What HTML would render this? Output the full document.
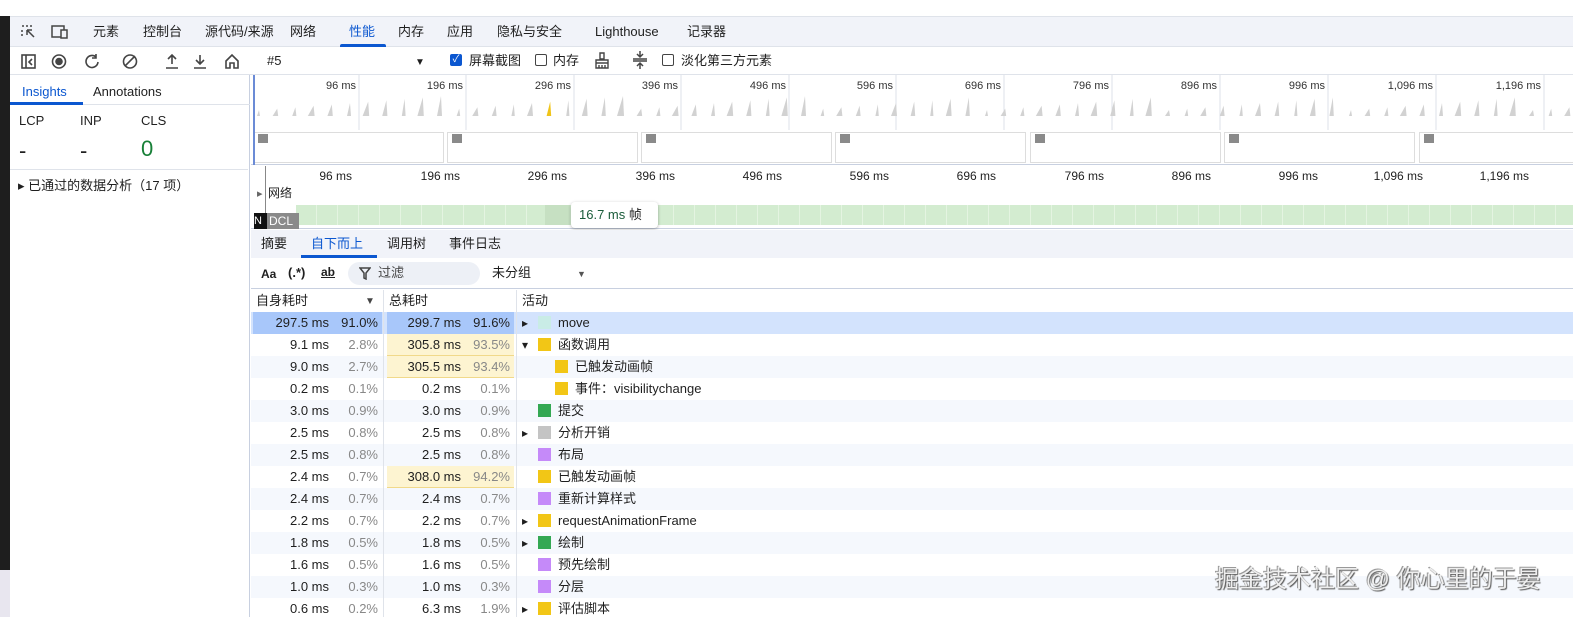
<!DOCTYPE html><html><head><meta charset="utf-8"><style>
*{box-sizing:border-box;margin:0;padding:0}
body{width:1573px;height:617px;overflow:hidden;background:#fff;font-family:"Liberation Sans","Noto Sans CJK SC",sans-serif;font-size:13px;line-height:16px;color:#1f1f1f;position:relative}
.a{position:absolute}
.dark{left:0;top:16px;width:10px;height:554px;background:#1e1e1e}
.tabbar{left:10px;top:16px;width:1563px;height:31px;background:#f1f3f9;border-top:1px solid #dfe3ea;border-bottom:1px solid #dfe3ea}
.tabbar span{position:absolute;top:7px;font-size:13px}
.tool{left:10px;top:47px;width:1563px;height:28px;border-bottom:1px solid #dfe3ea}
.tool span{position:absolute;top:6px;font-size:13px}
.left{left:10px;top:75px;width:240px;height:542px;border-right:1px solid #c8d0e0}
.ms{font-size:11px;position:absolute}
.cell{position:absolute;font-size:13px;text-align:right}
.gray{color:#888}
.sq{position:absolute;width:13px;height:13px}
</style></head><body>
<div class="a dark"></div>
<div class="a" style="left:0;top:570px;width:10px;height:47px;background:#e8e6ef"></div>
<div class="a tabbar">
<svg class="a" style="left:10px;top:7px" width="18" height="16"><path d="M2 2h2M6 2h2M10 2h2M2 6v2M2 10v2M7 6l7 7M7 6v5M7 6h5" stroke="#444" stroke-width="1.5" fill="none"/></svg>
<svg class="a" style="left:40px;top:7px" width="20" height="16"><rect x="2" y="2" width="12" height="11" fill="none" stroke="#444" stroke-width="1.5"/><rect x="11" y="6" width="6" height="8" fill="#f1f3f9" stroke="#444" stroke-width="1.5"/></svg>
<span style="left:83px">元素</span><span style="left:133px">控制台</span><span style="left:195px">源代码/来源</span><span style="left:280px">网络</span><span style="left:339px;color:#0b57d0">性能</span><span style="left:388px">内存</span><span style="left:437px">应用</span><span style="left:487px">隐私与安全</span><span style="left:585px">Lighthouse</span><span style="left:677px">记录器</span>
<div class="a" style="left:330px;top:27px;width:46px;height:3px;background:#0b57d0;border-radius:2px 2px 0 0"></div>
</div>
<div class="a tool">
<svg class="a" style="left:10px;top:6px" width="200" height="18" fill="none" stroke="#444" stroke-width="1.6">
<rect x="2" y="2" width="13" height="13"/><path d="M6 2v13M12 6l-3 3 3 3"/>
<circle cx="39" cy="8.5" r="6.5"/><circle cx="39" cy="8.5" r="3" fill="#444"/>
<path d="M76 4a6 6 0 1 0 2 5M76 1v4h-4"/>
<circle cx="110" cy="8.5" r="6.5"/><path d="M105 13l10-10"/>
<path d="M152 11v-9M148 6l4-4 4 4M146 15h12"/>
<path d="M180 2v9M176 7l4 4 4-4M174 15h12"/>
</svg>
<svg class="a" style="left:213px;top:5px" width="18" height="18" fill="none" stroke="#444" stroke-width="1.6"><path d="M3 9l6-6 6 6v7h-4v-5h-4v5h-4z"/></svg>
<span style="left:257px">#5</span><span style="left:405px;font-size:10px;top:8px">▼</span>
<div class="a" style="left:440px;top:7px;width:12px;height:12px;background:#0b57d0;border-radius:2px;color:#fff;font-size:10px;line-height:12px;text-align:center">✓</div>
<span style="left:459px">屏幕截图</span>
<div class="a" style="left:525px;top:7px;width:12px;height:12px;border:1px solid #444;border-radius:2px"></div><span style="left:543px">内存</span>
<svg class="a" style="left:583px;top:4px" width="18" height="18" fill="none" stroke="#444" stroke-width="1.4"><path d="M7 2h4v6h-4zM3 9h12v3H3zM3 12v5h12v-5M6 14v3M9 14v3M12 14v3"/></svg>
<svg class="a" style="left:622px;top:3px" width="16" height="20" stroke="#444" stroke-width="1.5" fill="none"><path d="M8 1v5M5 4l3 3 3-3M1 9h14M1 11h14M8 19v-5M5 16l3-3 3 3"/></svg>
<div class="a" style="left:652px;top:7px;width:12px;height:12px;border:1px solid #444;border-radius:2px"></div><span style="left:671px">淡化第三方元素</span>
</div>
<div class="a left">
<div class="a" style="left:0;top:0;width:240px;height:30px;border-bottom:1px solid #dfe3ea"></div>
<span class="a" style="left:12px;top:9px;color:#0b57d0">Insights</span><span class="a" style="left:83px;top:9px">Annotations</span>
<div class="a" style="left:0;top:27px;width:73px;height:3px;background:#0b57d0"></div>
<span class="a" style="left:9px;top:38px">LCP</span><span class="a" style="left:70px;top:38px">INP</span><span class="a" style="left:131px;top:38px">CLS</span>
<span class="a" style="left:9px;top:64px;font-size:22px;line-height:24px">-</span><span class="a" style="left:70px;top:64px;font-size:22px;line-height:24px">-</span><span class="a" style="left:131px;top:62px;font-size:22px;line-height:24px;color:#188038">0</span>
<div class="a" style="left:0;top:94px;width:238px;border-top:1px solid #dfe3ea"></div>
<span class="a" style="left:8px;top:103px;font-size:13px">▸ 已通过的数据分析（17 项）</span>
</div>
<div class="a" style="left:251px;top:75px;width:1322px;height:90px;border-bottom:1px solid #c8d0e0">
<svg width="1322" height="90" id="ov"></svg>
</div>
<div class="a" id="ticks1"></div>
<div class="a" style="left:251px;top:166px;width:1322px;height:63px;border-bottom:1px solid #c8d0e0">
<div class="a" style="left:0;top:0;width:15px;height:63px;border-right:1px solid #888"></div>
<span class="a" style="left:6px;top:20px;font-size:11px;color:#666">▸</span><span class="a" style="left:17px;top:19px;font-size:12px">网络</span>
<div class="a" style="left:45px;top:39px;width:1277px;height:20px;background:repeating-linear-gradient(90deg,#d3ecd0 0 20px,#e4f4e1 20px 21px)"></div>
<div class="a" style="left:294px;top:39px;width:25px;height:20px;background:#c6e0c2"></div>
<div class="a" style="left:3px;top:47px;width:13px;height:16px;background:#111;color:#fff;font-size:11px">N</div>
<div class="a" style="left:16px;top:47px;width:32px;height:16px;background:#8a8a8a;color:#fff;font-size:12px;padding-left:2px">DCL</div>
<div class="a" style="left:320px;top:36px;width:87px;height:26px;background:#fff;border-radius:4px;box-shadow:0 1px 3px rgba(0,0,0,.3);font-size:13px;padding:5px 8px;color:#1a5c3a">16.7 ms <span style="color:#222">帧</span></div>
</div>
<div class="a" style="left:251px;top:230px;width:1322px;height:28px;background:#f1f3f9">
<span class="a" style="left:10px;top:6px">摘要</span><span class="a" style="left:60px;top:6px;color:#0b57d0">自下而上</span><span class="a" style="left:136px;top:6px">调用树</span><span class="a" style="left:198px;top:6px">事件日志</span>
<div class="a" style="left:50px;top:25px;width:76px;height:3px;background:#0b57d0"></div>
</div>
<div class="a" style="left:251px;top:258px;width:1322px;height:31px;border-bottom:1px solid #c8d0e0">
<span class="a" style="left:10px;top:8px;font-size:12px;font-weight:bold">Aa</span><span class="a" style="left:37px;top:7px;font-weight:bold">(.*)</span><span class="a" style="left:70px;top:6px;font-size:12px;text-decoration:underline;font-weight:bold">ab</span>
<div class="a" style="left:97px;top:4px;width:132px;height:23px;background:#edf0f6;border-radius:12px"></div>
<svg class="a" style="left:108px;top:9px" width="12" height="13" fill="none" stroke="#444" stroke-width="1.5"><path d="M1 1h10L7 6v6L5 11V6z"/></svg><span class="a" style="left:127px;top:7px;color:#444">过滤</span>
<span class="a" style="left:241px;top:7px">未分组</span><span class="a" style="left:326px;top:8px;font-size:9px;color:#555">▼</span>
</div>
<div class="a" style="left:251px;top:290px;width:1322px;height:22px">
<span class="a" style="left:5px;top:3px">自身耗时</span><span class="a" style="left:114px;top:4px;font-size:10px;color:#444">▼</span>
<span class="a" style="left:138px;top:3px">总耗时</span><span class="a" style="left:271px;top:3px">活动</span>
</div>
<div id="rows"></div>
<div class="a" style="left:383px;top:290px;height:327px;border-left:1px solid #dfe3ea"></div>
<div class="a" style="left:516px;top:290px;height:327px;border-left:1px solid #dfe3ea"></div>
<div class="a" style="left:1215px;top:566px;font-size:24px;line-height:28px;color:#eee;text-shadow:1px 1px 1px #555,-1px -1px 0 #999">掘金技术社区 @ 你心里的于晏</div>
<script>
var ov=document.getElementById('ov'),s='';
var xs=[108,215,323,430,538,645,753,861,969,1077,1185,1293];
var labels=['96 ms','196 ms','296 ms','396 ms','496 ms','596 ms','696 ms','796 ms','896 ms','996 ms','1,096 ms','1,196 ms'];
for(var i=0;i<xs.length;i++){s+='<line x1="'+xs[i]+'" y1="0" x2="'+xs[i]+'" y2="55" stroke="#dde1e8"/><text x="'+(xs[i]-3)+'" y="14" font-size="11" text-anchor="end" fill="#333" font-family="Liberation Sans">'+labels[i]+'</text>';}
for(var x=8;x<1320;x+=18.2){var h=6+((x*7)%14),w=2+((x*3)%4);var c=(x>290&&x<302)?'#f0c419':'#d2d2d2';s+='<polygon points="'+(x-w)+',41 '+x+','+(41-h)+' '+(x+1)+',41" fill="'+c+'"/>';}
var bx=[2,196,390,584,779,973,1168];
for(var i=0;i<bx.length;i++){s+='<rect x="'+(bx[i]+0.5)+'" y="57.5" width="190" height="30" fill="#fff" stroke="#ddd"/><rect x="'+(bx[i]+5)+'" y="59" width="10" height="9" fill="#8a8a8a"/>';}
s+='<line x1="3" y1="0" x2="3" y2="90" stroke="#6b8bd6" stroke-width="2"/>';
ov.innerHTML=s;
var t='';var xs2=[352,460,567,675,782,889,996,1104,1211,1318,1423,1529];
for(var i=0;i<xs2.length;i++)t+='<span class="ms" style="left:'+(xs2[i]-50)+'px;top:168px;width:50px;text-align:right;font-size:12px;position:absolute">'+labels[i]+'</span>';
document.getElementById('ticks1').outerHTML=t;
var R=[['297.5 ms','91.0%','299.7 ms','91.6%','▸','#c9ece6','move',0],
['9.1 ms','2.8%','305.8 ms','93.5%','▾','#f2c616','函数调用',0],
['9.0 ms','2.7%','305.5 ms','93.4%','','#f2c616','已触发动画帧',1],
['0.2 ms','0.1%','0.2 ms','0.1%','','#f2c616','事件：visibilitychange',1],
['3.0 ms','0.9%','3.0 ms','0.9%','','#34a853','提交',0],
['2.5 ms','0.8%','2.5 ms','0.8%','▸','#c4c4c4','分析开销',0],
['2.5 ms','0.8%','2.5 ms','0.8%','','#c58af9','布局',0],
['2.4 ms','0.7%','308.0 ms','94.2%','','#f2c616','已触发动画帧',0],
['2.4 ms','0.7%','2.4 ms','0.7%','','#c58af9','重新计算样式',0],
['2.2 ms','0.7%','2.2 ms','0.7%','▸','#f2c616','requestAnimationFrame',0],
['1.8 ms','0.5%','1.8 ms','0.5%','▸','#34a853','绘制',0],
['1.6 ms','0.5%','1.6 ms','0.5%','','#c58af9','预先绘制',0],
['1.0 ms','0.3%','1.0 ms','0.3%','','#c58af9','分层',0],
['0.6 ms','0.2%','6.3 ms','1.9%','▸','#f2c616','评估脚本',0]];
var h='';
for(var i=0;i<R.length;i++){var r=R[i],y=312+22*i;
var bg=i==0?'#d3e3fd':(i%2==1?'#fff':'#f5f8fd');
h+='<div class="a" style="left:251px;top:'+y+'px;width:1322px;height:22px;background:'+bg+'"></div>';
if(i==0){h+='<div class="a" style="left:253px;top:'+y+'px;width:129px;height:22px;background:#a8c7fa"></div><div class="a" style="left:387px;top:'+y+'px;width:127px;height:22px;background:#a8c7fa"></div>';}
if(r[2].length>7&&i>0){h+='<div class="a" style="left:387px;top:'+y+'px;width:127px;height:22px;background:#fdf4d1;border-bottom:1px solid #f1d98a"></div>';}
var g=i==0?'':' gray';
h+='<span class="cell" style="left:253px;top:'+(y+3)+'px;width:76px">'+r[0]+'</span><span class="cell'+g+'" style="left:330px;top:'+(y+3)+'px;width:48px">'+r[1]+'</span>';
h+='<span class="cell" style="left:387px;top:'+(y+3)+'px;width:74px">'+r[2]+'</span><span class="cell'+g+'" style="left:462px;top:'+(y+3)+'px;width:48px">'+r[3]+'</span>';
var ind=r[7]?17:0;
if(r[4])h+='<span class="a" style="left:522px;top:'+(y+3)+'px;font-size:12px">'+r[4]+'</span>';
h+='<div class="sq" style="left:'+(538+ind)+'px;top:'+(y+4)+'px;background:'+r[5]+'"></div><span class="a" style="left:'+(558+ind)+'px;top:'+(y+3)+'px">'+r[6]+'</span>';}
document.getElementById('rows').outerHTML=h;
</script>
</body></html>
